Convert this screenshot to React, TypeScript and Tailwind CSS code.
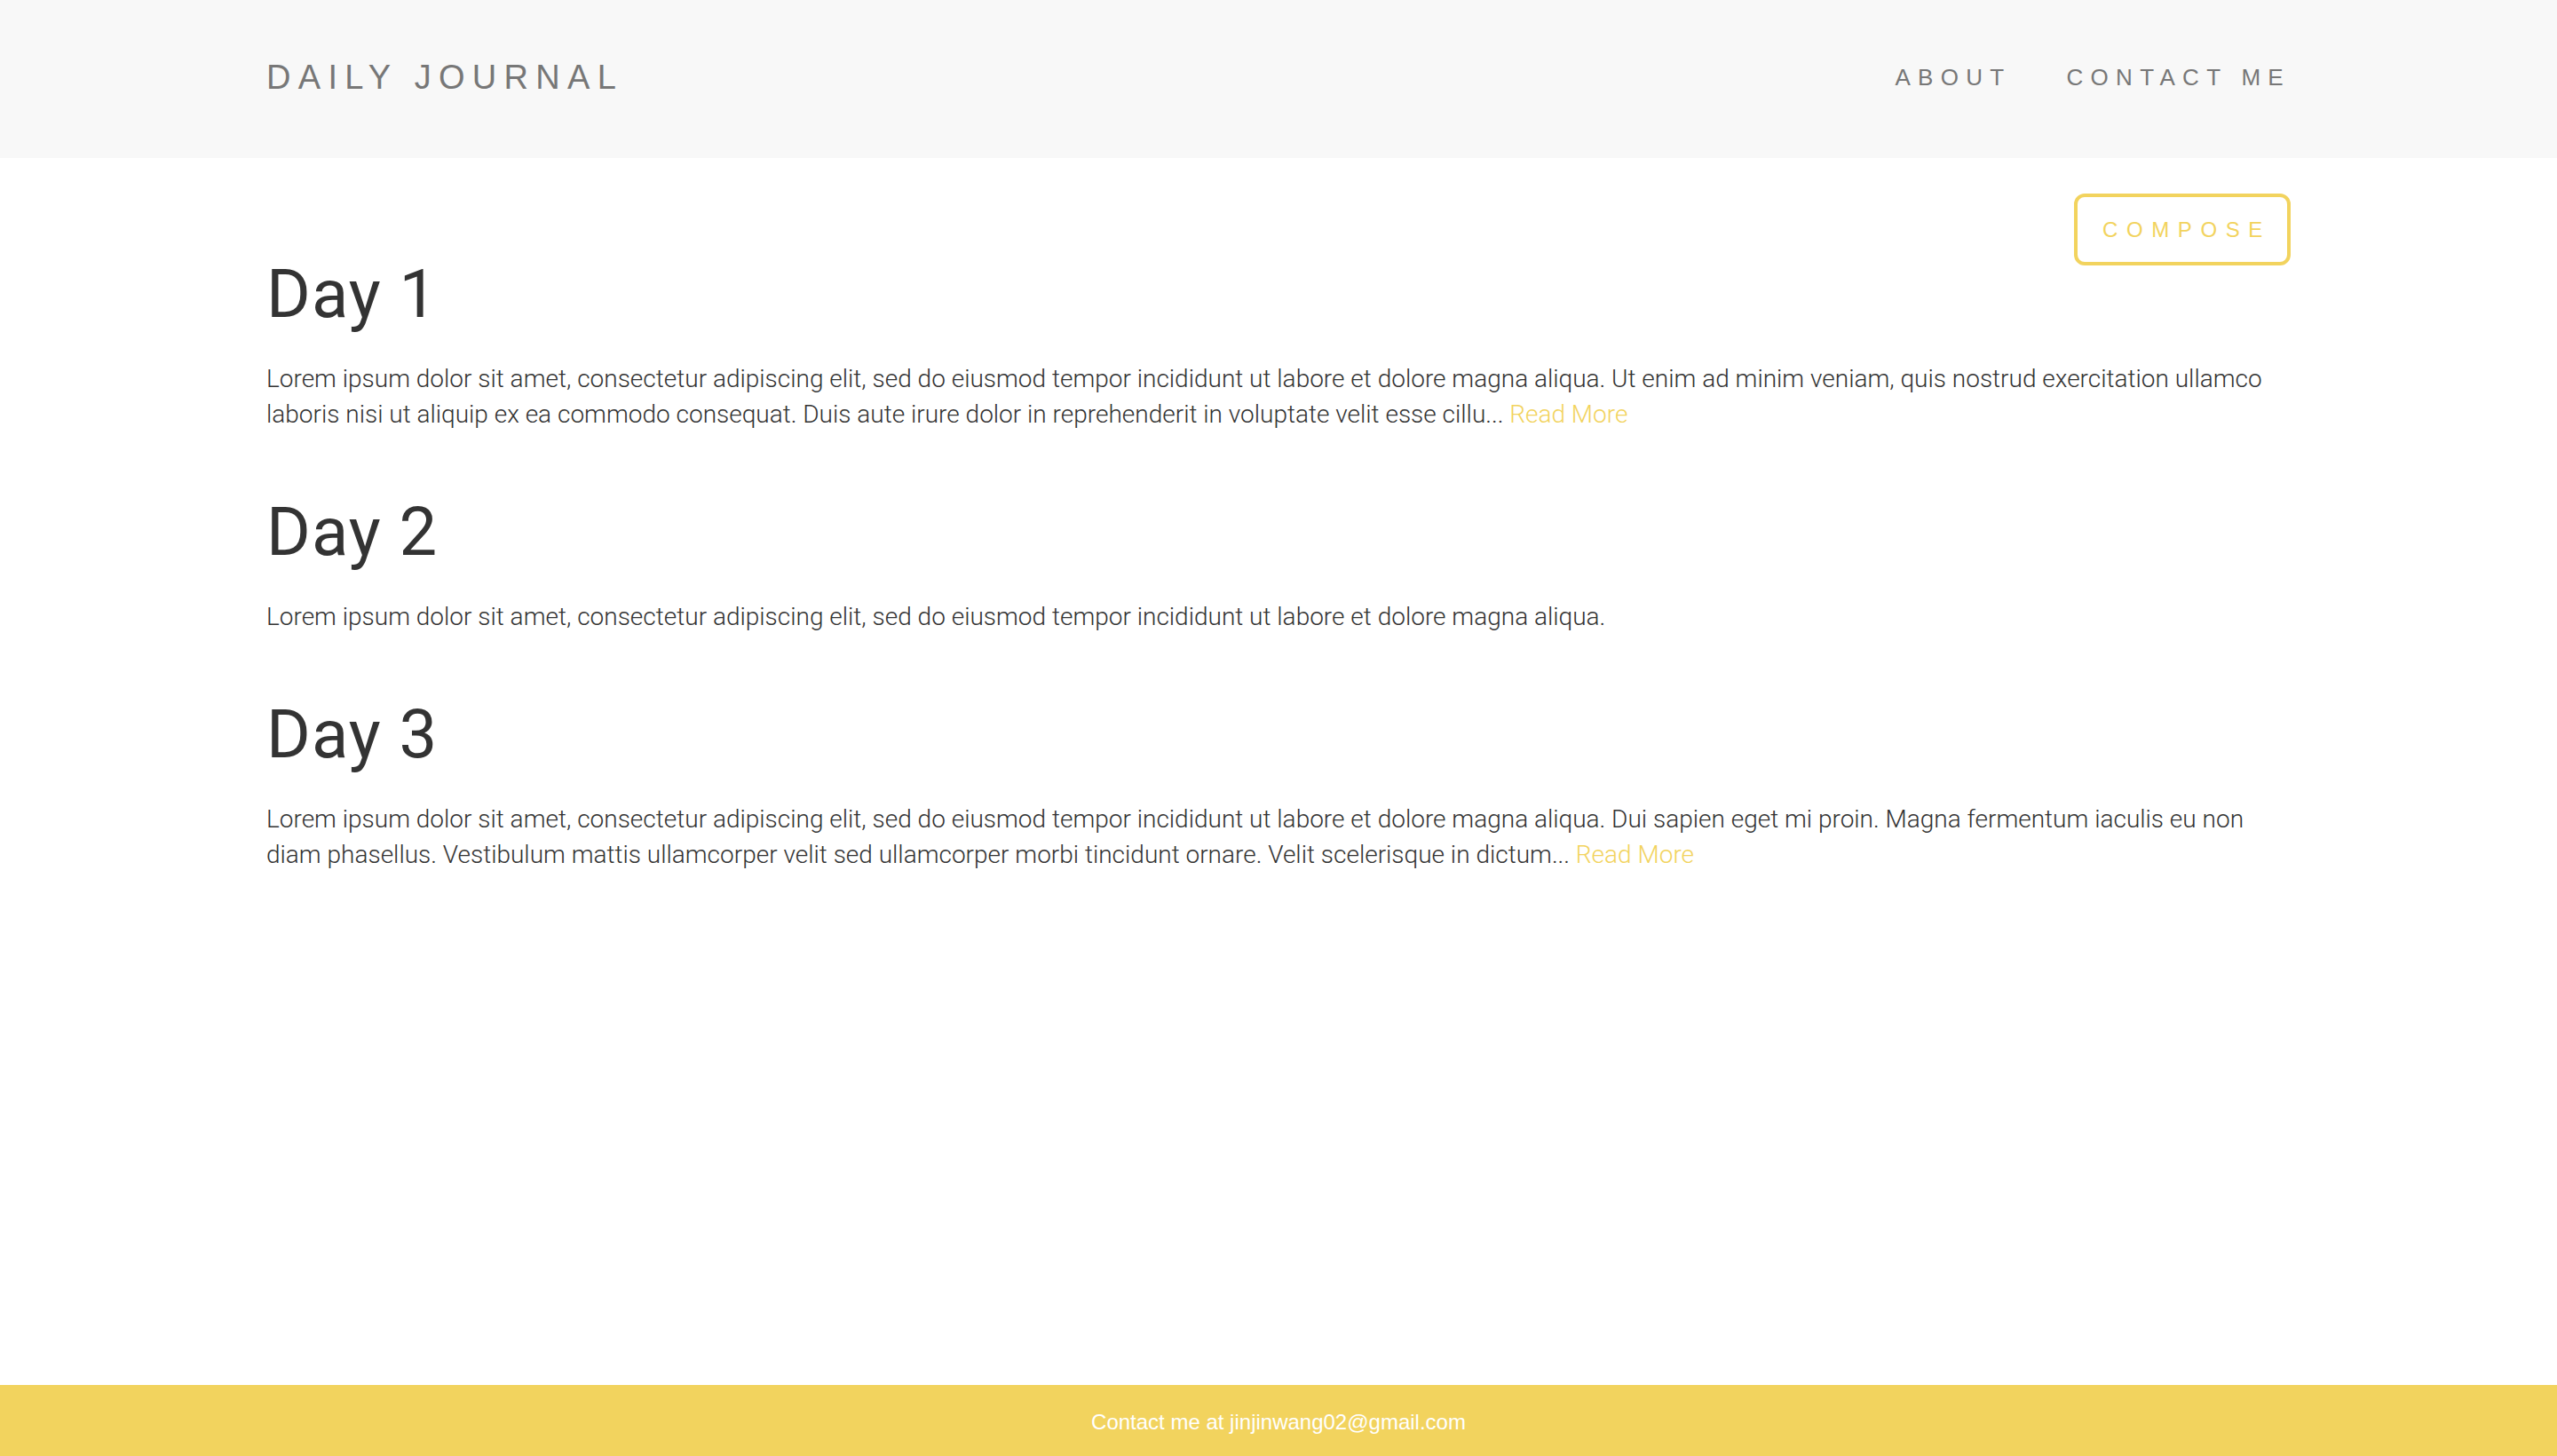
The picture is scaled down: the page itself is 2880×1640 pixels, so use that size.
const POSTS = [
  {
    title: "Day 1",
    body: "Lorem ipsum dolor sit amet, consectetur adipiscing elit, sed do eiusmod tempor incididunt ut labore et dolore magna aliqua. Ut enim ad minim veniam, quis nostrud exercitation ullamco laboris nisi ut aliquip ex ea commodo consequat. Duis aute irure dolor in reprehenderit in voluptate velit esse cillu...",
    more: true,
  },
  {
    title: "Day 2",
    body: "Lorem ipsum dolor sit amet, consectetur adipiscing elit, sed do eiusmod tempor incididunt ut labore et dolore magna aliqua.",
    more: false,
  },
  {
    title: "Day 3",
    body: "Lorem ipsum dolor sit amet, consectetur adipiscing elit, sed do eiusmod tempor incididunt ut labore et dolore magna aliqua. Dui sapien eget mi proin. Magna fermentum iaculis eu non diam phasellus. Vestibulum mattis ullamcorper velit sed ullamcorper morbi tincidunt ornare. Velit scelerisque in dictum...",
    more: true,
  },
];

const App = () => {
  return (
    <div className="flex min-h-screen flex-col bg-white">
      <header className="h-[178px] bg-[#f8f8f8] font-['Liberation_Sans',Arial,sans-serif] text-[#777]">
        <div className="mx-auto flex h-full w-[2280px] items-center justify-between pb-[4px]">
          <a href="#" className="text-[38px] leading-none tracking-[8.3px]">
            DAILY JOURNAL
          </a>
          <nav className="flex items-center gap-[62px] text-[26px] leading-none tracking-[8.3px]">
            <a href="#">ABOUT</a>
            <a href="#">CONTACT ME</a>
          </nav>
        </div>
      </header>

      <main className="mx-auto w-[2280px] flex-1 pt-[41px]">
        <a
          href="#"
          className="float-right -mt-[1px] flex h-[81px] w-[244px] items-center justify-center rounded-[12px] border-4 border-[#f2d35e] pl-[10px] font-['Liberation_Sans',Arial,sans-serif] text-[24px] leading-none tracking-[9.6px] text-[#f2d35e]">
          COMPOSE
        </a>
        {POSTS.map((post) => (
          <div key={post.title}>
            <h1 className="mt-[69px] font-['Roboto',sans-serif] text-[76px] font-normal leading-[86px] tracking-[1px] text-[#333]">
              {post.title}
            </h1>
            <p className="mt-[33px] font-['Roboto',sans-serif] text-[28px] font-light leading-[40px] text-[#333]">
              {post.body}
              {post.more && (
                <a href="#" className="text-[#f2d35e]">
                  {" "}
                  Read More
                </a>
              )}
            </p>
          </div>
        ))}
      </main>

      <footer className="flex h-[80px] items-center justify-center bg-[#f2d35e] pt-[4px] font-['Liberation_Sans',Arial,sans-serif] text-[24px] text-white">
        Contact me at jinjinwang02@gmail.com
      </footer>
    </div>
  );
};

export default App;
